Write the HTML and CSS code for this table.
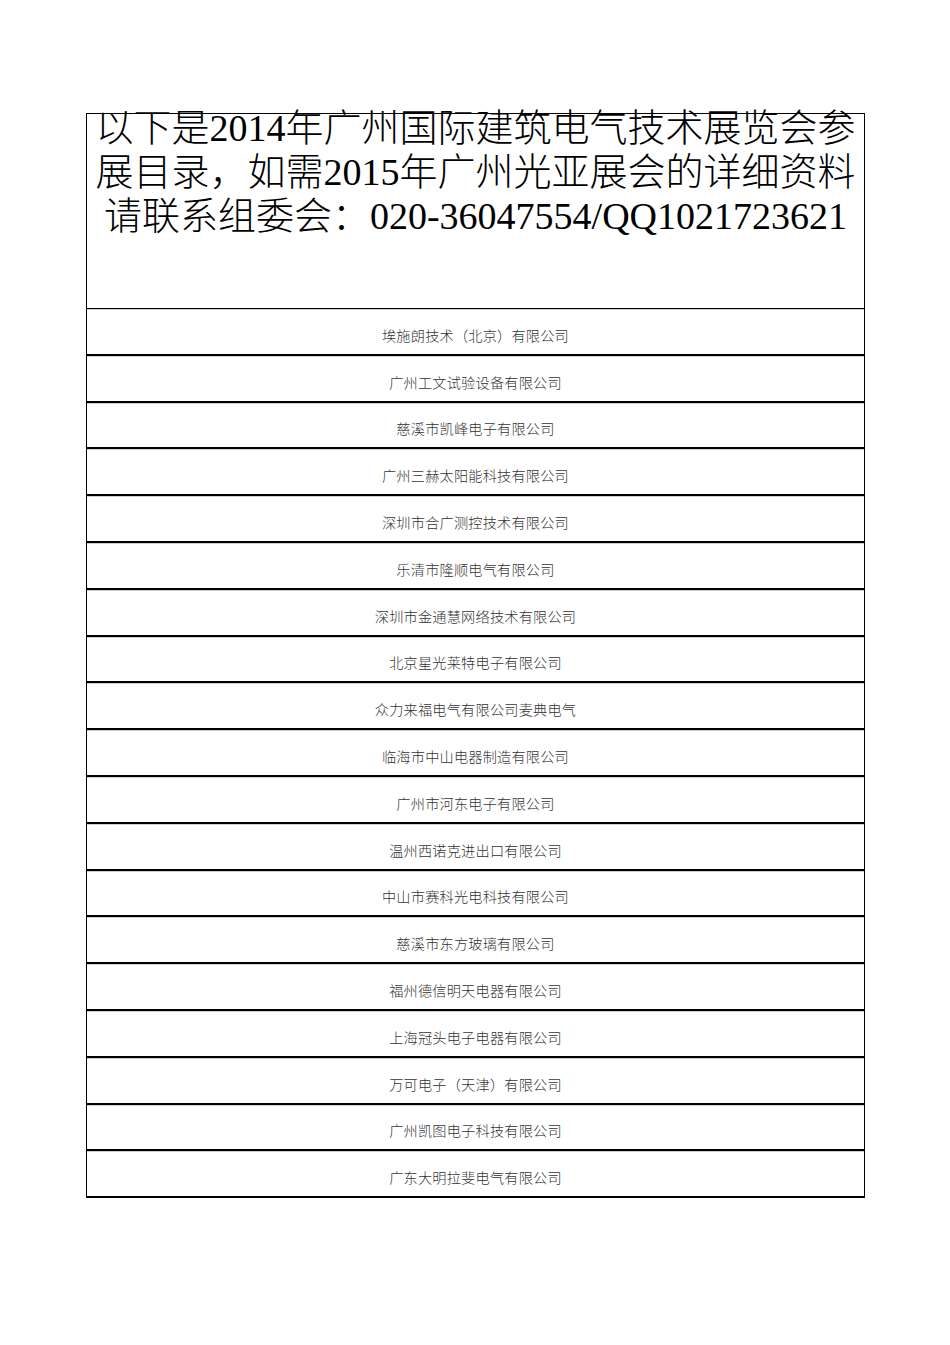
FILE: index.html
```html
<!DOCTYPE html>
<html lang="zh-CN">
<head>
<meta charset="utf-8">
<title>2014年广州国际建筑电气技术展览会参展目录</title>
<link rel="stylesheet" href="styles.css">
</head>
<body>
<div class="sheet">
  <div class="header">
    <div class="title">
      <div class="line">以下是<span class="lat">2014</span>年广州国际建筑电气技术展览会参</div>
      <div class="line">展目录，如需<span class="lat">2015</span>年广州光亚展会的详细资料</div>
      <div class="line">请联系组委会：<span class="lat">020-36047554/QQ1021723621</span></div>
    </div>
  </div>
  <div class="row">埃施朗技术（北京）有限公司</div>
  <div class="row">广州工文试验设备有限公司</div>
  <div class="row">慈溪市凯峰电子有限公司</div>
  <div class="row">广州三赫太阳能科技有限公司</div>
  <div class="row">深圳市合广测控技术有限公司</div>
  <div class="row">乐清市隆顺电气有限公司</div>
  <div class="row">深圳市金通慧网络技术有限公司</div>
  <div class="row">北京星光莱特电子有限公司</div>
  <div class="row">众力来福电气有限公司麦典电气</div>
  <div class="row">临海市中山电器制造有限公司</div>
  <div class="row">广州市河东电子有限公司</div>
  <div class="row">温州西诺克进出口有限公司</div>
  <div class="row">中山市赛科光电科技有限公司</div>
  <div class="row">慈溪市东方玻璃有限公司</div>
  <div class="row">福州德信明天电器有限公司</div>
  <div class="row">上海冠头电子电器有限公司</div>
  <div class="row">万可电子（天津）有限公司</div>
  <div class="row">广州凯图电子科技有限公司</div>
  <div class="row">广东大明拉斐电气有限公司</div>
</div>
</body>
</html>
```

FILE: styles.css
```css
html, body {
  margin: 0;
  padding: 0;
  background: #ffffff;
}

body {
  font-family: "Liberation Serif", "Noto Sans CJK SC", serif;
  color: #000;
}

.sheet {
  margin: 113px 0 0 86px;
  width: 779px;
  box-sizing: border-box;
  border-left: 1px solid #000;
  border-right: 1px solid #000;
  border-top: 1px solid #000;
}

.header {
  display: flow-root;
  height: 195px;
  box-sizing: border-box;
  border-bottom: 1px solid #000;
}

.title {
  margin-top: -8px;
  font-family: "Liberation Serif", "Noto Sans CJK SC", serif;
  font-size: 38px;
  font-weight: 300;
  line-height: 44px;
  text-align: center;
  white-space: nowrap;
}

.line {
  height: 44px;
}

.lat {
  font-family: "Liberation Serif", serif;
  font-size: 38px;
  font-weight: 400;
}

.row {
  height: 46.8px;
  box-sizing: border-box;
  border-bottom: 2px solid #000;
  box-shadow: 0 1px 0 #d0d0d0 inset;
  display: flex;
  align-items: center;
  justify-content: center;
  padding-top: 7px;
  font-family: "Liberation Serif", "Noto Sans CJK SC", serif;
  font-size: 14.2px;
  font-weight: 300;
  letter-spacing: 0.2px;
  color: #333;
}
```
